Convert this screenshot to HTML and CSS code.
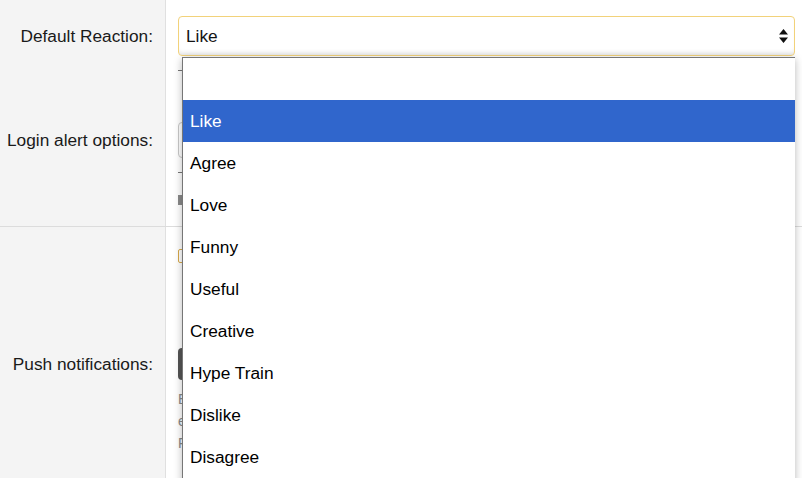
FILE: index.html
```html
<!DOCTYPE html>
<html>
<head>
<meta charset="utf-8">
<link rel="stylesheet" href="styles.css">
</head>
<body>
<div class="page">
  <div class="row r1">
    <div class="label">Default Reaction:</div>
    <div class="field">
      <div class="select">
        <span>Like</span>
        <svg class="arrows" width="9" height="14" viewBox="0 0 9 14"><path d="M4.5 0 L9 5.5 H0 Z M4.5 14 L9 8.5 H0 Z" fill="#111"/></svg>
      </div>
    </div>
  </div>
  <div class="row r2">
    <div class="label">Login alert options:</div>
    <div class="field">
      <div class="hint-line"></div>
      <div class="box"></div>
      <div class="hint-line second"></div>
      <div class="small-block"></div>
    </div>
  </div>
  <div class="row r3">
    <div class="label"></div>
    <div class="field">
      <div class="checkbox"></div>
    </div>
  </div>
  <div class="row r4">
    <div class="label">Push notifications:</div>
    <div class="field">
      <div class="button"></div>
      <div class="muted">E</div>
      <div class="muted">e</div>
      <div class="muted">F</div>
    </div>
  </div>

  <ul class="dropdown">
    <li class="opt empty"></li>
    <li class="opt selected">Like</li>
    <li class="opt">Agree</li>
    <li class="opt">Love</li>
    <li class="opt">Funny</li>
    <li class="opt">Useful</li>
    <li class="opt">Creative</li>
    <li class="opt">Hype Train</li>
    <li class="opt">Dislike</li>
    <li class="opt">Disagree</li>
  </ul>
</div>
</body>
</html>
```

FILE: styles.css
```css
html, body {
  margin: 0;
  padding: 0;
  background: #ffffff;
  overflow: hidden;
}

.page {
  position: relative;
  width: 802px;
  height: 478px;
  overflow: hidden;
  font-family: "Liberation Sans", Arial, sans-serif;
  font-size: 17.3px;
  color: #1a1a1a;
  display: flex;
  flex-direction: column;
}

.row {
  display: flex;
}

.label {
  width: 166px;
  flex: none;
  box-sizing: border-box;
  background: #f4f4f4;
  border-right: 1px solid #e0e0e0;
  padding-right: 12px;
  text-align: right;
  white-space: nowrap;
}

.field {
  flex: 1;
  padding: 0 7px 0 12px;
  display: flex;
  flex-direction: column;
  align-items: flex-start;
}

/* row 1 */
.r1 { height: 64px; }
.r1 .label { padding-top: 16px; line-height: 40px; }
.r1 .field { padding-top: 16px; align-items: stretch; }

.select {
  height: 40px;
  box-sizing: border-box;
  border: 1px solid #f2d27a;
  border-radius: 4px;
  padding: 0 6px 0 7px;
  display: flex;
  align-items: center;
  justify-content: space-between;
  color: #141414;
  box-shadow: inset 0 -5px 5px -3px rgba(0,0,0,0.10);
}

/* row 2 */
.r2 { height: 162px; border-bottom: 1px solid #dcdcdc; }
.r2 .label { padding-top: 58px; line-height: 36px; }
.hint-line {
  margin-top: 6px;
  width: 60px;
  height: 1px;
  background: #777;
}
.hint-line.second { margin-top: 14px; }
.box {
  margin-top: 51px;
  width: 200px;
  height: 36px;
  box-sizing: border-box;
  border: 1px solid #c8c8c8;
  border-radius: 4px;
}
.small-block {
  margin-top: 22px;
  width: 10px;
  height: 10px;
  background: #8a8a8a;
}

/* row 3 */
.r3 { height: 103px; }
.checkbox {
  margin-top: 22px;
  width: 14px;
  height: 14px;
  box-sizing: border-box;
  border: 1px solid #d7a848;
  border-radius: 2px;
}

/* row 4 */
.r4 { flex: 1; }
.r4 .label { padding-top: 18px; line-height: 32px; }
.button {
  margin-top: 18px;
  width: 120px;
  height: 32px;
  background: #555;
  border-radius: 4px;
}
.muted {
  font-size: 14px;
  line-height: 22px;
  color: #888;
}
.button + .muted { margin-top: 8px; }

/* dropdown popup */
.dropdown {
  position: absolute;
  left: 182px;
  top: 57px;
  width: 613px;
  height: 440px;
  margin: 0;
  padding: 0;
  list-style: none;
  box-sizing: border-box;
  background: #fff;
  border-left: 1px solid #767676;
  border-top: 1px solid #767676;
  box-shadow: 0 2px 8px rgba(0,0,0,0.28);
}

.opt {
  height: 42px;
  line-height: 42px;
  padding-left: 7px;
  color: #000;
}

.opt.selected {
  background: #3066cc;
  color: #fff;
}
```
